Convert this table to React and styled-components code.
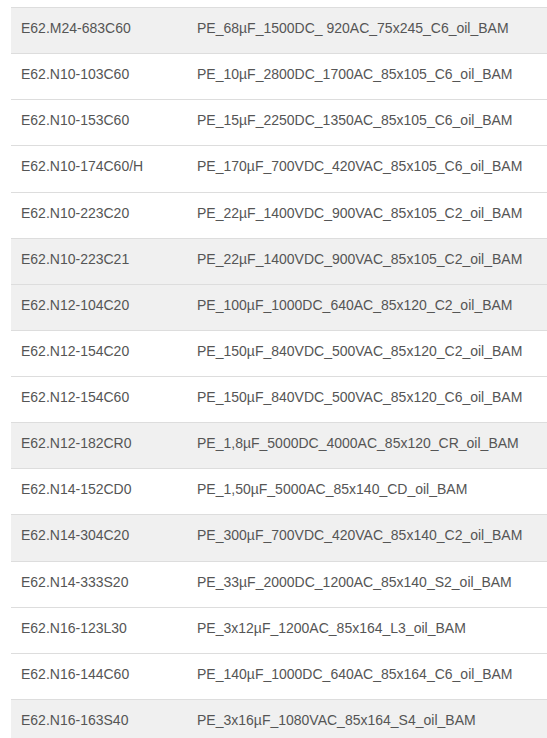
import styled, { createGlobalStyle } from 'styled-components';

const GlobalStyle = createGlobalStyle`
  html, body {
    margin: 0;
    padding: 0;
    background: #ffffff;
    overflow: hidden;
  }
  body {
    font-family: "Liberation Sans", Arial, sans-serif;
  }
`;

const rows = [
  { code: 'E62.M24-683C60', name: 'PE_68µF_1500DC_ 920AC_75x245_C6_oil_BAM', shaded: true },
  { code: 'E62.N10-103C60', name: 'PE_10µF_2800DC_1700AC_85x105_C6_oil_BAM' },
  { code: 'E62.N10-153C60', name: 'PE_15µF_2250DC_1350AC_85x105_C6_oil_BAM' },
  { code: 'E62.N10-174C60/H', name: 'PE_170µF_700VDC_420VAC_85x105_C6_oil_BAM' },
  { code: 'E62.N10-223C20', name: 'PE_22µF_1400VDC_900VAC_85x105_C2_oil_BAM' },
  { code: 'E62.N10-223C21', name: 'PE_22µF_1400VDC_900VAC_85x105_C2_oil_BAM', shaded: true },
  { code: 'E62.N12-104C20', name: 'PE_100µF_1000DC_640AC_85x120_C2_oil_BAM', shaded: true },
  { code: 'E62.N12-154C20', name: 'PE_150µF_840VDC_500VAC_85x120_C2_oil_BAM' },
  { code: 'E62.N12-154C60', name: 'PE_150µF_840VDC_500VAC_85x120_C6_oil_BAM' },
  { code: 'E62.N12-182CR0', name: 'PE_1,8µF_5000DC_4000AC_85x120_CR_oil_BAM', shaded: true },
  { code: 'E62.N14-152CD0', name: 'PE_1,50µF_5000AC_85x140_CD_oil_BAM' },
  { code: 'E62.N14-304C20', name: 'PE_300µF_700VDC_420VAC_85x140_C2_oil_BAM', shaded: true },
  { code: 'E62.N14-333S20', name: 'PE_33µF_2000DC_1200AC_85x140_S2_oil_BAM' },
  { code: 'E62.N16-123L30', name: 'PE_3x12µF_1200AC_85x164_L3_oil_BAM' },
  { code: 'E62.N16-144C60', name: 'PE_140µF_1000DC_640AC_85x164_C6_oil_BAM' },
  { code: 'E62.N16-163S40', name: 'PE_3x16µF_1080VAC_85x164_S4_oil_BAM', shaded: true },
];

const App = () => {
  return (
    <>
      <GlobalStyle />
      <Wrapper>
        <Table>
          <tbody>
            {rows.map((row) => (
              <Row key={row.code} $shaded={row.shaded}>
                <CodeCell>{row.code}</CodeCell>
                <NameCell>{row.name}</NameCell>
              </Row>
            ))}
          </tbody>
        </Table>
      </Wrapper>
    </>
  );
};

export default App;

const Wrapper = styled.div`
  padding: 7px 0 0 11px;
  width: 560px;
`;

const Table = styled.table`
  width: 100%;
  border-collapse: collapse;
  table-layout: fixed;
  font-size: 14px;
  line-height: 20px;
  color: #555555;
`;

const Row = styled.tr`
  background: ${(p) => (p.$shaded ? '#f0f0f0' : '#ffffff')};
  border-top: 1px solid #dddddd;
`;

const CodeCell = styled.td`
  width: 156px;
  padding: 10px 10px 15.13px;
  white-space: nowrap;
  vertical-align: top;
`;

const NameCell = styled.td`
  padding: 10px 10px 15.13px;
  white-space: nowrap;
  vertical-align: top;
`;
